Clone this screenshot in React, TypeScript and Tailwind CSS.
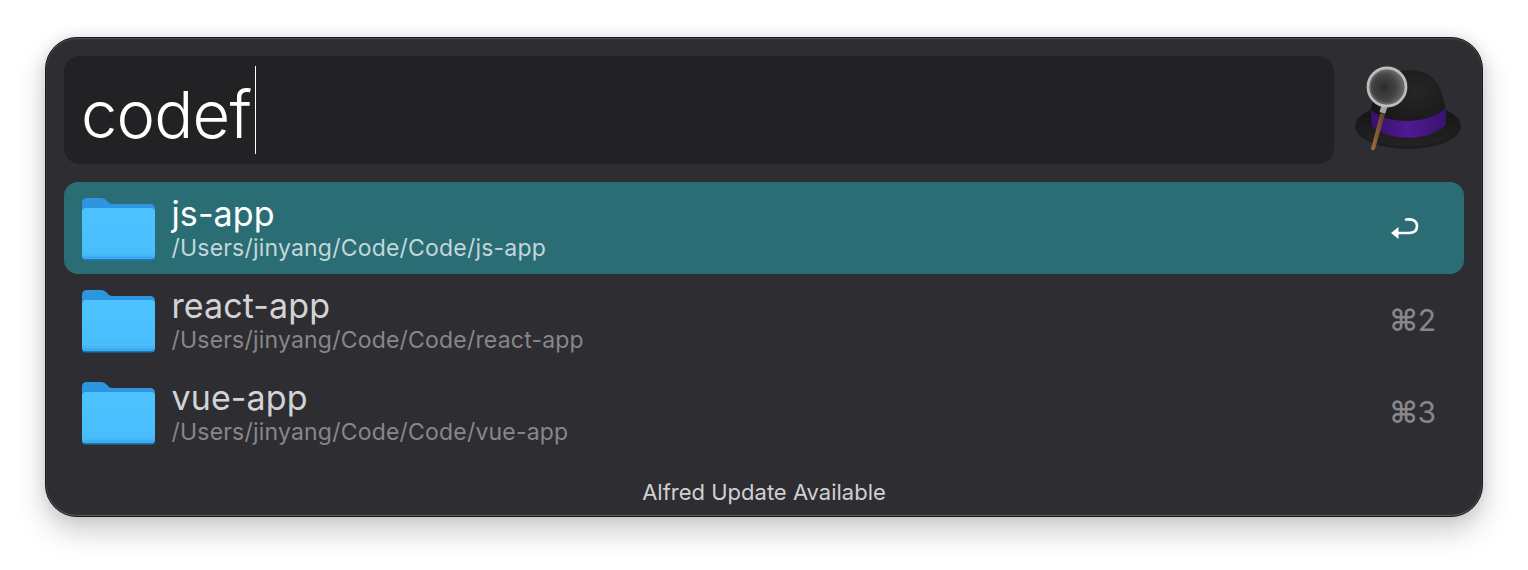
const FONT = "font-['Inter','Liberation_Sans',sans-serif]";

function Folder({ id }: { id: string }) {
  return (
    <svg width="76" height="66" viewBox="0 0 76 66" className="-ml-[0.5px] shrink-0">
      <defs>
        <linearGradient id={id + "f"} x1="0" y1="0" x2="0" y2="1">
          <stop offset="0" stopColor="#4cc2ff" />
          <stop offset="0.8" stopColor="#4abffe" />
          <stop offset="1" stopColor="#43b3f4" />
        </linearGradient>
      </defs>
      <path d="M2 20 L2 8 Q2 3 7 3 L21 3 Q24 3 26 5 L29 8 Q30 9 33 9 L70 9 Q75 9 75 14 L75 20 Z" fill="#2e95e0" />
      <rect x="2" y="13" width="73" height="52.5" rx="3.5" fill="#1c76b8" />
      <rect x="2" y="13" width="73" height="51" rx="3.5" fill={`url(#${id}f)`} />
      <rect x="2" y="57" width="73" height="1" fill="#62cbfb" opacity="0.35" />
      <rect x="3" y="61.5" width="71" height="2" rx="1" fill="#38a4ea" opacity="0.8" />
    </svg>
  );
}

function Hat() {
  return (
    <svg width="110" height="90" viewBox="0 0 110 90">
      <defs>
        <radialGradient id="dome" cx="0.62" cy="0.32" r="0.75">
          <stop offset="0" stopColor="#262627" />
          <stop offset="0.7" stopColor="#19191a" />
          <stop offset="1" stopColor="#111112" />
        </radialGradient>
        <linearGradient id="brim" x1="0" y1="0" x2="0" y2="1">
          <stop offset="0" stopColor="#131314" />
          <stop offset="1" stopColor="#232324" />
        </linearGradient>
        <radialGradient id="lens" cx="0.42" cy="0.52" r="0.6">
          <stop offset="0" stopColor="#2c2c2c" />
          <stop offset="0.55" stopColor="#454545" />
          <stop offset="1" stopColor="#7c7c7c" />
        </radialGradient>
        <linearGradient id="band" x1="0" y1="0" x2="1" y2="0">
          <stop offset="0" stopColor="#37106b" />
          <stop offset="0.5" stopColor="#4f1a90" />
          <stop offset="1" stopColor="#3a1270" />
        </linearGradient>
        <linearGradient id="stick" x1="0" y1="0" x2="1" y2="0">
          <stop offset="0" stopColor="#a56f42" />
          <stop offset="1" stopColor="#5e3c22" />
        </linearGradient>
      </defs>
      <ellipse cx="55" cy="61" rx="53" ry="23" fill="#1d1d1e" />
      <ellipse cx="55" cy="60" rx="52" ry="21" fill="url(#brim)" />
      <path d="M17 58 C17 22 34 5 57 5 C82 5 93 24 93 58 C75 76 35 76 17 58 Z" fill="url(#dome)" />
      <path d="M18 45 C35 60 75 60 93 43 L93 60 C75 77 35 77 18 60 Z" fill="url(#band)" />
      <path d="M27.5 48 L32 49.5 L22 84 Q20 86.5 18 84 Z" fill="url(#stick)" />
      <rect x="27.5" y="40" width="6" height="8" rx="1" fill="#a4a4a4" transform="rotate(18 30 44)" />
      <circle cx="34" cy="22" r="19.5" fill="url(#lens)" />
      <circle cx="34" cy="22" r="19" fill="none" stroke="#bcbcbc" strokeWidth="2.8" />
      <circle cx="34" cy="22" r="16.6" fill="none" stroke="#666" strokeWidth="1.2" />
    </svg>
  );
}

function Row({ title, path, shortcut, selected, id }: { title: string; path: string; shortcut?: string; selected?: boolean; id: string }) {
  return (
    <div className={`flex h-[92px] items-center rounded-[14px] pl-[16px] ${selected ? "bg-[#2a6d75]" : ""}`}>
      <Folder id={id} />
      <div className="ml-[16px] flex min-w-0 flex-1 flex-col">
        <div className={`-translate-y-[1px] text-[34px] leading-[40px] tracking-[0.1px] ${selected ? "text-white" : "text-[#d3d3d4]"}`}>{title}</div>
        <div className={`text-[23px] leading-[26px] tracking-[0.2px] ${selected ? "text-[#c3d7d9]" : "text-[#87878a]"}`}>{path}</div>
      </div>
      {selected ? (
        <svg width="30" height="24" viewBox="0 0 30 24" className="mr-[44px]">
          <path d="M16 3.5 Q27 2.5 27 10 Q27 17 19 17 L7 17" fill="none" stroke="#fff" strokeWidth="2.6" strokeLinecap="round" />
          <path d="M1 17 L8.5 11 L8.5 23 Z" fill="#fff" />
        </svg>
      ) : (
        <div className="mr-[28px] flex items-center text-[30px] leading-none text-[#87878a]">
          <span className="translate-y-[1px] font-['DejaVu_Sans',sans-serif] text-[30px] font-bold">⌘</span>{shortcut}
        </div>
      )}
    </div>
  );
}

export default function App() {
  return (
    <div className={`h-[570px] w-[1528px] overflow-hidden bg-white pl-[45px] pt-[37px] ${FONT}`}>
      <div className="relative flex h-[480px] w-[1438px] flex-col rounded-[32px] border border-[#1b1b1d] bg-[#2e2d32] px-[18px] pt-[18px] shadow-[0_14px_30px_rgba(0,0,0,0.2),0_0_14px_rgba(0,0,0,0.1),inset_0_1px_1px_rgba(255,255,255,0.16),inset_0_-1px_1px_rgba(255,255,255,0.24)]">
        <div className="flex items-center">
          <div className="flex h-[108px] w-[1270px] items-center rounded-[16px] bg-[#222224] pl-[17px]">
            <span className="mt-[8px] text-[65px] font-light leading-none tracking-[-0.8px] text-white">codef</span>
            <span className="ml-[4px] h-[88px] w-[1px] bg-white" />
          </div>
          <div className="ml-[19px]">
            <Hat />
          </div>
        </div>
        <div className="mt-[18px] flex flex-col">
          <Row id="a" title="js-app" path="/Users/jinyang/Code/Code/js-app" selected />
          <Row id="b" title="react-app" path="/Users/jinyang/Code/Code/react-app" shortcut="2" />
          <Row id="c" title="vue-app" path="/Users/jinyang/Code/Code/vue-app" shortcut="3" />
        </div>
        <div className="mt-[21px] text-center text-[22px] leading-[26px] text-[#d0d0d1]">Alfred Update Available</div>
      </div>
    </div>
  );
}
